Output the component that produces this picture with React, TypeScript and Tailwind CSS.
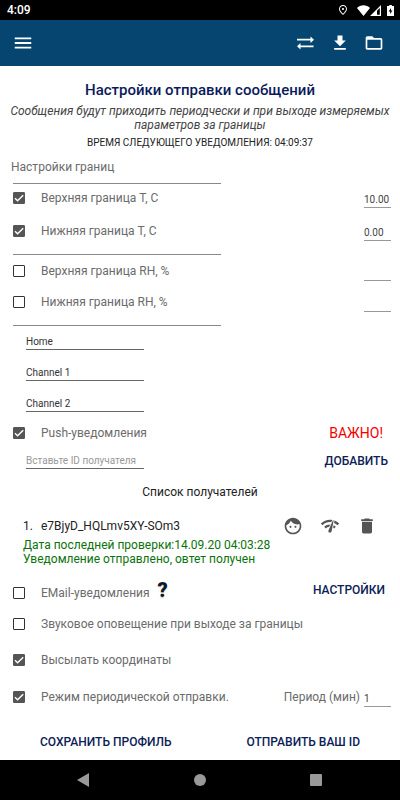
import { ReactNode, useId } from "react";
import {
  MdDelete,
  MdFace,
  MdFolderOpen,
  MdGetApp,
  MdMenu,
  MdNetworkCheck,
  MdOutlinePlace,
} from "react-icons/md";

const channels = ["Home", "Channel 1", "Channel 2"];

function StatusBar() {
  return (
    <div className="flex h-5 items-center justify-between bg-black pl-[7px] pr-1.5 text-white">
      <span className="text-xs font-medium">4:09</span>
      <div className="flex items-center">
        <MdOutlinePlace className="mr-2 size-3" />
        <svg viewBox="0 0 13 11" className="h-[11px] w-[13px]" fill="currentColor">
          <path d="M0 3C3.500 -.6 9.500 -.6 13 3L6.500 11Z" />
        </svg>
        <svg viewBox="0 0 11 11" className="mr-1.5 h-[11px] w-[11px]" fill="currentColor">
          <path fillRule="evenodd" d="M11 0V11H0ZM9.800 3V9.800H7V5.800Z" />
        </svg>
        <svg viewBox="0 0 7 11" className="h-[11px] w-[7px]" fill="currentColor">
          <path fillRule="evenodd" d="M2.200 0h2.600v1H7v10H0V1h2.200ZM4 3L1.600 6.500H3.200V9L5.500 5.500H4Z" />
        </svg>
      </div>
    </div>
  );
}

function AppBar() {
  return (
    <header className="flex h-[46px] items-center justify-between bg-[#05456f] pl-3 pr-4 text-white">
      <button type="button" aria-label="Меню">
        <MdMenu className="size-[22px]" />
      </button>
      <div className="flex items-center gap-3.5">
        <button type="button" aria-label="Обмен">
          <svg viewBox="0 0 20 20" className="size-5" fill="currentColor">
            <path d="M1 5.800H14.500V3.500L18 6.700L14.500 9.900V7.600H1ZM17.500 12.400H4.500V10.100L1 13.300L4.500 16.500V14.200H17.500Z" />
          </svg>
        </button>
        <button type="button" aria-label="Загрузить">
          <MdGetApp className="size-5" />
        </button>
        <button type="button" aria-label="Открыть папку">
          <MdFolderOpen className="size-5" />
        </button>
      </div>
    </header>
  );
}

function CheckRow({
  label,
  checked = false,
  className = "h-7",
  children,
}: {
  label: string;
  checked?: boolean;
  className?: string;
  children?: ReactNode;
}) {
  return (
    <div className={`flex items-center justify-between pl-[13px] pr-[9px] ${className}`}>
      <label className="flex items-center gap-4 text-xs text-[#6b6b6b]">
        <span className="grid">
          <input
            type="checkbox"
            defaultChecked={checked}
            className="peer col-start-1 row-start-1 size-3 appearance-none rounded-[1px] border border-[#333] checked:border-[#555] checked:bg-[#555]"
          />
          <svg
            viewBox="0 0 12 12"
            className="pointer-events-none invisible col-start-1 row-start-1 size-3 peer-checked:visible"
            fill="none"
            stroke="white"
            strokeWidth="1.400"
          >
            <path d="M2 6.200L4.600 8.800L10.200 3.200" />
          </svg>
        </span>
        {label}
      </label>
      {children}
    </div>
  );
}

function ValueInput({ id, label, value = "" }: { id?: string; label?: string; value?: string }) {
  return (
    <input
      id={id}
      aria-label={label}
      defaultValue={value}
      className="mt-1 h-4 w-[27px] border-b border-[#999] text-[10px] text-[#444] outline-none"
    />
  );
}

function Rule() {
  return <hr className="ml-[13px] w-[52%] border-t border-[#888]" />;
}

function TextButton({ children }: { children: ReactNode }) {
  return (
    <button type="button" className="text-xs font-medium text-[#0b2156]">
      {children}
    </button>
  );
}

export default function App() {
  const periodId = useId();
  return (
    <div className="min-h-screen bg-white font-['Roboto',sans-serif]">
      <StatusBar />
      <AppBar />

      <main className="pt-3 pb-0.5">
        <h1 className="text-center text-[15px] leading-6 font-medium text-[#0b1a5c]">
          Настройки отправки сообщений
        </h1>
        <p className="mt-0.5 px-2 text-center text-xs leading-[14px] text-[#444] italic">
          Сообщения будут приходить периодчески и при выходе измеряемых параметров за границы
        </p>
        <p className="mt-1 text-center text-[10px] leading-[14px] text-[#222]">
          ВРЕМЯ СЛЕДУЮЩЕГО УВЕДОМЛЕНИЯ: 04:09:37
        </p>

        <h2 className="mt-[9px] mb-2 pl-[11px] text-xs leading-4 text-[#6b6b6b]">Настройки границ</h2>
        <Rule />
        <div className="mb-[9px] flex flex-col gap-[5px]">
          <CheckRow label="Верхняя граница T, C" checked>
            <ValueInput label="Верхняя граница T" value="10.00" />
          </CheckRow>
          <CheckRow label="Нижняя граница T, C" checked>
            <ValueInput label="Нижняя граница T" value="0.00" />
          </CheckRow>
        </div>
        <Rule />
        <div className="mb-2">
          <CheckRow label="Верхняя граница RH, %" className="h-[31px]">
            <ValueInput label="Верхняя граница RH" />
          </CheckRow>
          <CheckRow label="Нижняя граница RH, %" className="h-[31px]">
            <ValueInput label="Нижняя граница RH" />
          </CheckRow>
        </div>
        <Rule />

        <div className="mt-2 flex flex-col gap-[15px] pl-[26px]">
          {channels.map((name) => (
            <input
              key={name}
              aria-label={name}
              defaultValue={name}
              className="h-4 w-[118px] border-b border-[#666] text-[10px] text-[#333] outline-none"
            />
          ))}
        </div>

        <CheckRow label="Push-уведомления" checked className="mt-[7px] h-7">
          <button type="button" className="mr-2 text-sm text-[#f50000]">
            ВАЖНО!
          </button>
        </CheckRow>
        <div className="mt-1.5 flex h-4 items-center justify-between pr-3 pl-[26px]">
          <input
            aria-label="ID получателя"
            placeholder="Вставьте ID получателя"
            className="h-4 w-[118px] border-b border-[#666] text-[10px] outline-none placeholder:text-[#999]"
          />
          <TextButton>ДОБАВИТЬ</TextButton>
        </div>

        <h2 className="mt-[15px] text-center text-xs leading-4 text-[#222]">Список получателей</h2>
        <div className="mt-3.5 flex h-6 items-center justify-between pr-[23px] pl-[23px]">
          <div className="flex gap-2 text-xs text-[#222]">
            <span>1.</span>
            <span>e7BjyD_HQLmv5XY-SOm3</span>
          </div>
          <div className="flex gap-[17px] text-[#555]">
            <button type="button" aria-label="Профиль">
              <MdFace className="size-5" />
            </button>
            <button type="button" aria-label="Проверить связь">
              <MdNetworkCheck className="size-5" />
            </button>
            <button type="button" aria-label="Удалить">
              <MdDelete className="size-5" />
            </button>
          </div>
        </div>
        <p className="pl-[23px] text-xs leading-[14px] text-[#0a730a]">
          Дата последней проверки:14.09.20 04:03:28
          <br />
          Уведомление отправлено, овтет получен
        </p>

        <CheckRow label="EMail-уведомления" className="mt-[13px] h-7">
          <div className="flex flex-1 items-center justify-between pr-1.5 pb-1.5 pl-2">
            <button
              type="button"
              aria-label="Справка"
              className="text-xl leading-5 font-black text-[#0a1a2a] text-shadow-sm"
            >
              ?
            </button>
            <TextButton>НАСТРОЙКИ</TextButton>
          </div>
        </CheckRow>
        <CheckRow label="Звуковое оповещение при выходе за границы" className="mt-[3px] h-7" />
        <CheckRow label="Высылать координаты" checked className="mt-2 h-7" />
        <CheckRow label="Режим периодической отправки." checked className="mt-[9px] h-7">
          <div className="flex items-center gap-1">
            <label htmlFor={periodId} className="text-xs text-[#6b6b6b]">
              Период (мин)
            </label>
            <ValueInput id={periodId} value="1" />
          </div>
        </CheckRow>

        <div className="mt-[15px] flex h-8 items-center justify-between px-10">
          <TextButton>СОХРАНИТЬ ПРОФИЛЬ</TextButton>
          <TextButton>ОТПРАВИТЬ ВАШ ID</TextButton>
        </div>
      </main>

      <nav className="flex h-10 items-center justify-between bg-black pr-[78px] pl-[76px] text-[#999]">
        <button type="button" aria-label="Назад">
          <svg viewBox="0 0 14 14" className="size-3.5" fill="currentColor">
            <path d="M1 7L13 0V14Z" />
          </svg>
        </button>
        <button type="button" aria-label="Домой" className="size-3 rounded-full bg-[#999]" />
        <button type="button" aria-label="Недавние" className="size-3 rounded-[1px] bg-[#999]" />
      </nav>
    </div>
  );
}
